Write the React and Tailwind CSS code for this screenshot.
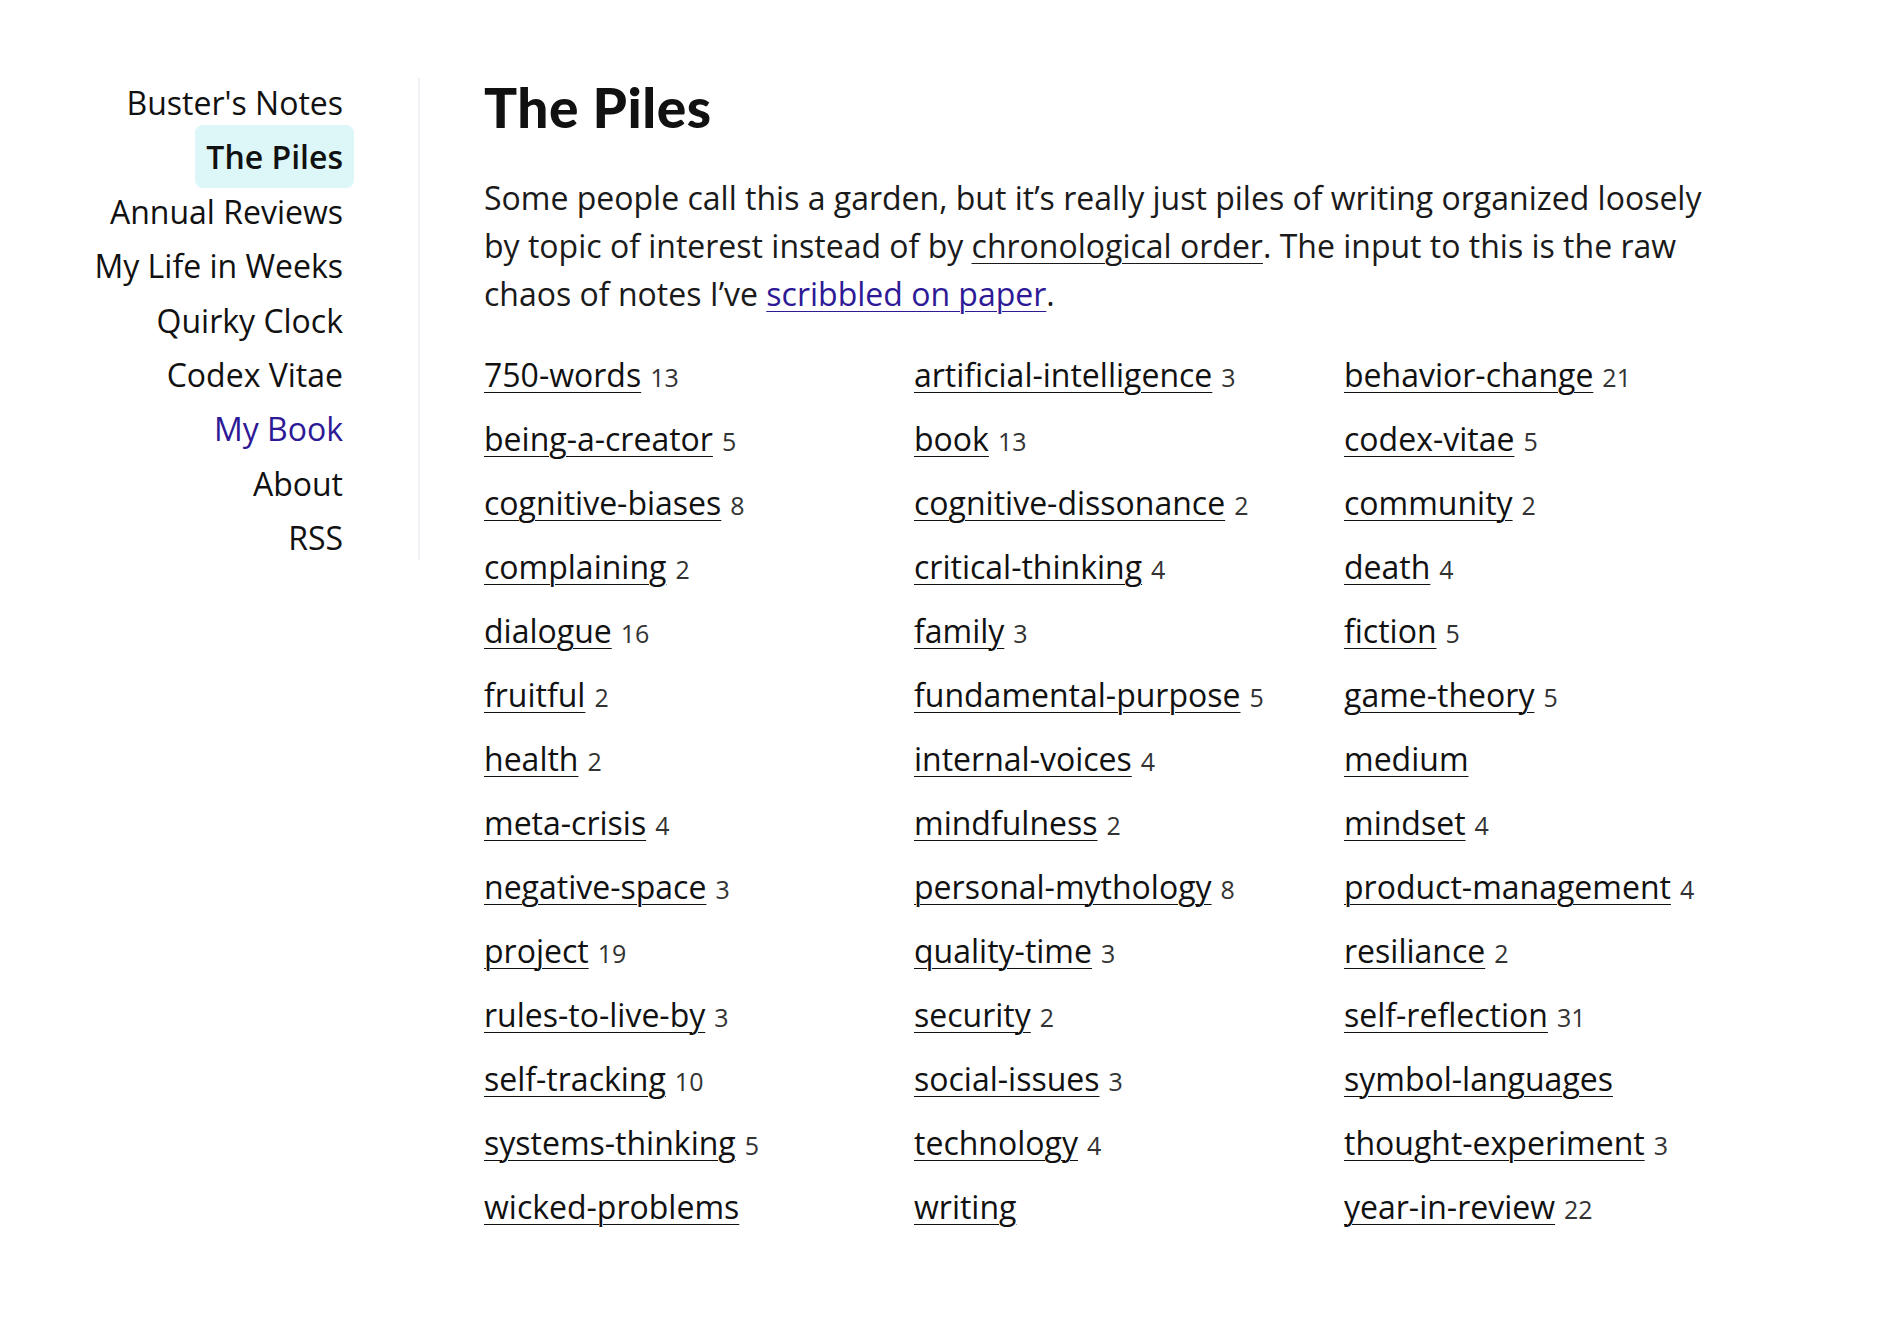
const nav = [
  { label: "Buster's Notes" },
  { label: 'The Piles', active: true },
  { label: 'Annual Reviews' },
  { label: 'My Life in Weeks' },
  { label: 'Quirky Clock' },
  { label: 'Codex Vitae' },
  { label: 'My Book', accent: true },
  { label: 'About' },
  { label: 'RSS' },
];

const tags = [
  ['750-words', 13], ['artificial-intelligence', 3], ['behavior-change', 21],
  ['being-a-creator', 5], ['book', 13], ['codex-vitae', 5],
  ['cognitive-biases', 8], ['cognitive-dissonance', 2], ['community', 2],
  ['complaining', 2], ['critical-thinking', 4], ['death', 4],
  ['dialogue', 16], ['family', 3], ['fiction', 5],
  ['fruitful', 2], ['fundamental-purpose', 5], ['game-theory', 5],
  ['health', 2], ['internal-voices', 4], ['medium', null],
  ['meta-crisis', 4], ['mindfulness', 2], ['mindset', 4],
  ['negative-space', 3], ['personal-mythology', 8], ['product-management', 4],
  ['project', 19], ['quality-time', 3], ['resiliance', 2],
  ['rules-to-live-by', 3], ['security', 2], ['self-reflection', 31],
  ['self-tracking', 10], ['social-issues', 3], ['symbol-languages', null],
  ['systems-thinking', 5], ['technology', 4], ['thought-experiment', 3],
  ['wicked-problems', null], ['writing', null], ['year-in-review', 22],
];

export default function App() {
  return (
    <div
      className="min-h-screen bg-white text-[#111] flex"
      style={{ fontFamily: '"Open Sans", sans-serif' }}
    >
      {/* sidebar */}
      <nav className="w-[354px] shrink-0 pt-[76px] text-right text-[32px] leading-[54.4px]">
        {nav.map((n) => (
          <div key={n.label}>
            <a
              className={`px-[11px] py-[10px] rounded-lg ${
                n.active ? 'bg-[#ddf6f8] font-semibold' : ''
              } ${n.accent ? 'text-[#2e1a96]' : ''}`}
            >
              {n.label}
            </a>
          </div>
        ))}
      </nav>

      <div className="ml-[64px] mt-[78px] w-[2px] h-[482px] bg-[#eef2f6]" />

      {/* content */}
      <main className="ml-[64px] w-[1290px] pt-[77px]">
        <h1
          className="text-[55px] leading-[1.1] font-black tracking-[0.5px]"
          style={{ fontFamily: 'Lato, sans-serif' }}
        >
          The Piles
        </h1>
        <p className="mt-[36px] text-[32px] leading-[48px] text-[#1a1a1a] max-w-[1232px]">
          Some people call this a garden, but it’s really just piles of writing organized loosely
          by topic of interest instead of by <a className="underline underline-offset-[5px] decoration-1">chronological order</a>. The
          input to this is the raw chaos of notes I’ve{' '}
          <a className="underline underline-offset-[5px] decoration-1 text-[#2e1a96]">scribbled on paper</a>.
        </p>

        <div className="mt-[25px] grid grid-cols-3">
          {tags.map(([t, c]) => (
            <div key={t} className="h-[64px] text-[32px] leading-[64px] whitespace-nowrap">
              <a className="leading-none underline underline-offset-[5px] decoration-1">{t}</a>
              {c != null && <span className="leading-none ml-[9px] text-[25px] text-[#333]">{c}</span>}
            </div>
          ))}
        </div>
      </main>
    </div>
  );
}
